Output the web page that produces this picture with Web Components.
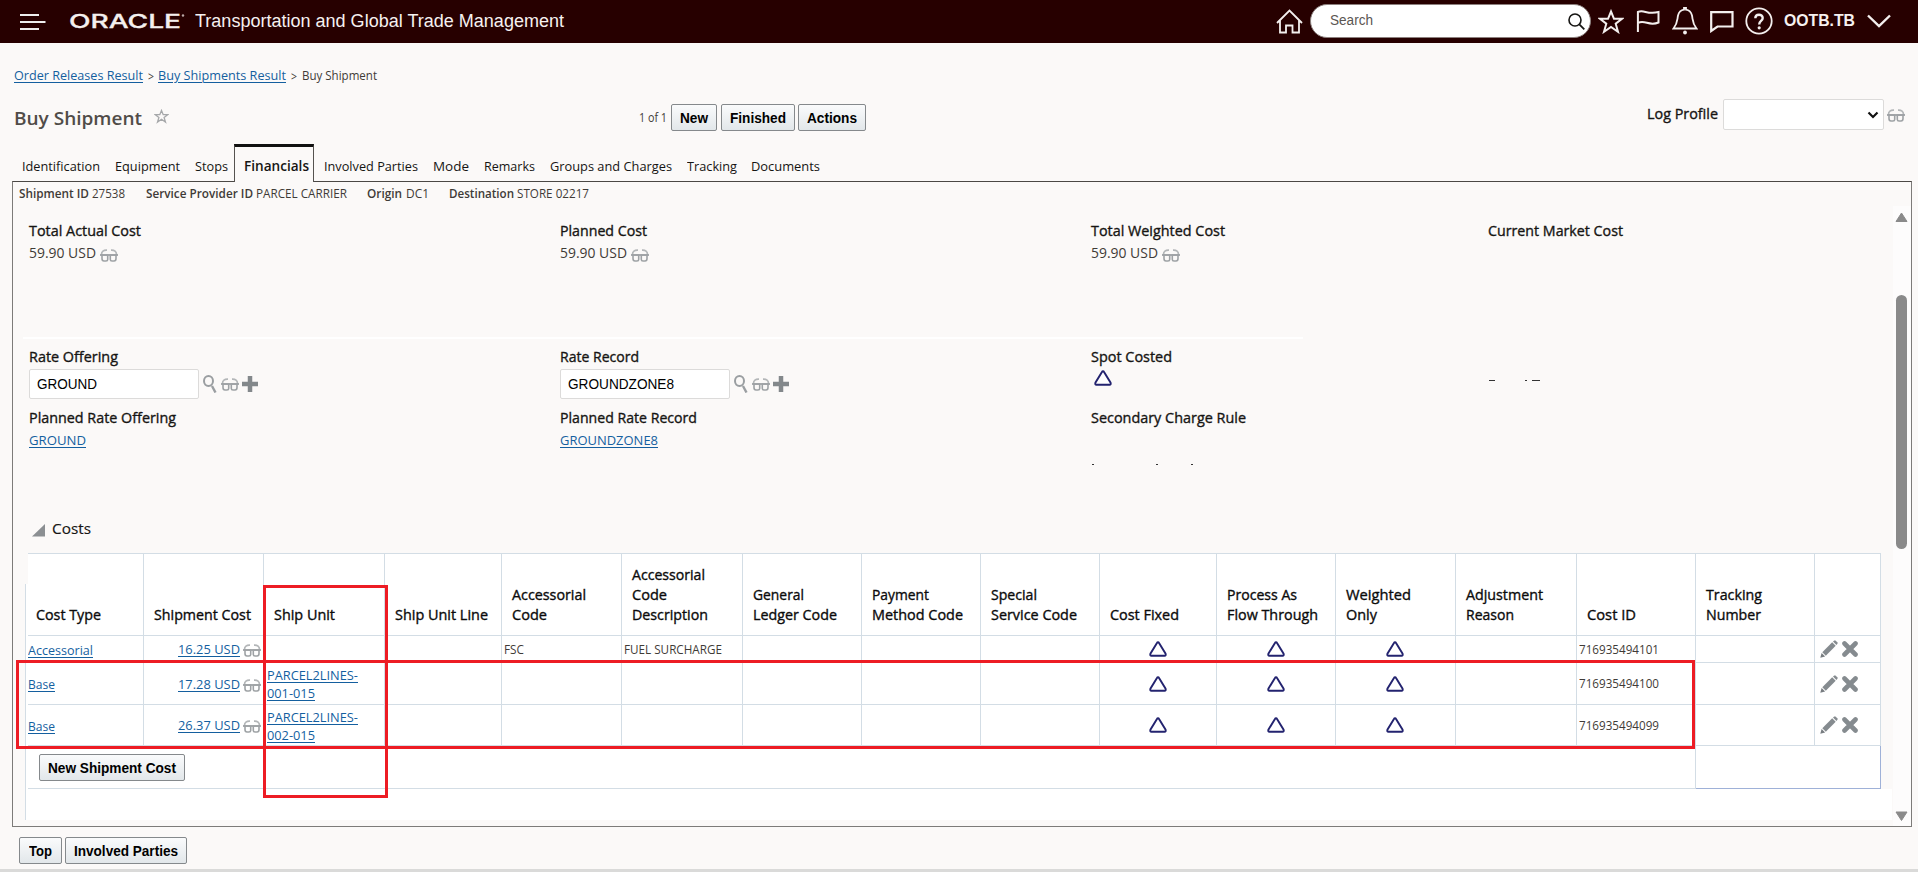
<!DOCTYPE html>
<html lang="en">
<head>
<meta charset="utf-8">
<title>Buy Shipment</title>
<style>
html,body{margin:0;padding:0;background:#fbf9f8}
body{width:1918px;height:872px;overflow:hidden;font-family:"Open Sans","Noto Sans",sans-serif;color:#161513}
</style>
</head>
<body>
<buy-shipment-page></buy-shipment-page>
<script>
const define = (name, html, after) => {
  const tpl = document.createElement('template');
  tpl.innerHTML = html;
  customElements.define(name, class extends HTMLElement {
    constructor() {
      super();
      this.attachShadow({ mode: 'open' }).append(tpl.content.cloneNode(true));
    }
    connectedCallback() { if (after) after(this, this.shadowRoot); }
  });
};

/* A single line of text condensed or expanded to a given width. */
define('fit-text', `<style>
:host{display:block;flex:none;white-space:nowrap;line-height:20px;text-align:left}
span{display:inline-block;transform-origin:0 50%}
:host([link]) span{color:#145f9f;text-decoration:underline;text-decoration-thickness:1px;text-underline-offset:2px}
</style><span><slot></slot></span>`, (el, root) => {
  const w = +el.getAttribute('w'), s = root.querySelector('span');
  el.style.width = w + 'px';
  const n = s.offsetWidth && s.getBoundingClientRect().width;
  if (n) s.style.transform = 'scaleX(' + (w / n) + ')';
});

const ICONS = {
  menu: [26,16,'<path d="M0 1h19M0 8h25.5M0 15h19" stroke="#eee" stroke-width="2"/>'],
  home: [27,25,'<path d="M1 14 13.500 1.500 26 14M4 11.500V23.500H10V16.500H16.500V23.500H23V11.500" fill="none" stroke="#f4efee" stroke-width="1.8"/>'],
  search: [17,17,'<circle cx="7" cy="7" r="6" fill="none" stroke="#161513" stroke-width="1.6"/><path d="m11.300 11.300 5 5" stroke="#161513" stroke-width="1.8"/>'],
  star: [26,25,'<path d="M13 2.500 16 9.800H24L17.700 14.700 20 22.800 13 18 6 22.800 8.300 14.700 2 9.800H10Z" fill="none" stroke="#f4efee" stroke-width="2"/>'],
  flag: [24,23,'<path d="M1.900 22V2C8-.8 11 5 22.500 2V12.500C13 16.500 9 9.500 1.900 13" fill="none" stroke="#f4efee" stroke-width="2"/>'],
  bell: [26,28,'<path d="M1.500 21.500C5.500 16.500 5 14 6 8.500 7 4.500 9.500 3 12 2.700V1h2V2.700C16.500 3 19 4.500 20 8.500 21 14 20.500 16.500 24.500 21.500Z" fill="none" stroke="#f4efee" stroke-width="1.800"/><circle cx="13" cy="25.500" r="1.900" fill="#f4efee"/>'],
  chat: [24,22,'<path d="M1.200 1.200H22.500V15.500H7.500L1.200 20Z" fill="none" stroke="#f4efee" stroke-width="2.200"/>'],
  help: [28,28,'<circle cx="14" cy="14" r="12.700" fill="none" stroke="#f4efee" stroke-width="1.800"/><path d="M10.300 11.300C10.300 6.500 17.700 6.700 17.700 11 17.700 14 14.200 14 14.200 17.400" fill="none" stroke="#f4efee" stroke-width="2.400"/><circle cx="14.200" cy="20.800" r="1.600" fill="#f4efee"/>'],
  down: [24,14,'<path d="m1 1.500 11 10.500L23 1.500" fill="none" stroke="#f4efee" stroke-width="2.400"/>'],
  fav: [15,15,'<path d="m7.500 1.500 1.700 4.200h4.500L10.100 8.500l1.400 4.600-4-2.800-4 2.800 1.400-4.600L1.300 5.700h4.500Z" fill="none" stroke="#a6a8aa" stroke-width="1.300"/>'],
  caret: [12,8,'<path d="m1.500 1.500 4.500 4.500 4.500-4.500" fill="none" stroke="#111" stroke-width="2.200"/>'],
  view: [18,13,'<path d="M1.500 5.500C1.500 2.500 3.500 1 7 1.200M16.500 5.500C16.500 2.500 14.500 1 11 1.200" fill="none" stroke="#b3b6b8" stroke-width="1.700"/><path d="M0 6H18" stroke="#8d9194" stroke-width="1.500"/><path d="M2 6H7.700V10.500Q7.700 12 6 12H4Q2 12 2 9.500ZM16 6H10.300V10.500Q10.300 12 12 12H14Q16 12 16 9.500Z" fill="none" stroke="#9ea2a5" stroke-width="1.600"/>'],
  find: [14,18,'<ellipse cx="5.500" cy="6" rx="4.500" ry="5" fill="none" stroke="#9a9ea1" stroke-width="2"/><path d="m9 11 3.500 6.500" stroke="#9a9ea1" stroke-width="2.400"/>'],
  plus: [16,16,'<path d="M8 0V16M0 8H16" stroke="#83888b" stroke-width="4.500"/>'],
  tri: [18,16,'<path d="M9 1.300Q9.700 1.300 10.200 2.200L16.600 12.700Q17.200 14.700 15.500 14.800H2.500Q.8 14.700 1.400 12.700L7.800 2.200Q8.300 1.300 9 1.300Z" fill="#fff" stroke="#23236f" stroke-width="1.900"/>'],
  pencil: [18,18,'<path d="M.3 17.700 1.600 12.900 5.100 16.400Z" fill="#777c80"/><path d="M2.300 12.200 12.200 2.300 15.700 5.800 5.800 15.700Z" fill="#858b8f"/><path d="M13 1.600 14.200.5H15.500L17.500 2.500V3.800L16.400 5Z" fill="#858b8f"/>'],
  x: [16,16,'<path d="m2.500 2.500 11 11m0-11-11 11" stroke="#858b8f" stroke-width="4.600" stroke-linecap="round"/>'],
  fold: [14,13,'<path d="M13 0V12.500H0Z" fill="#8b8f92"/>'],
  up: [13,11,'<path d="M6.500 1 12 9.500H1Z" fill="#8a8a8a" stroke="#8a8a8a" stroke-linejoin="round"/>'],
  dn: [13,11,'<path d="M6.500 9.500 12 1H1Z" fill="#8a8a8a" stroke="#8a8a8a" stroke-linejoin="round"/>']
};
define('ui-icon', '<style>:host{display:block;flex:none}svg{display:block}</style><div></div>', (el, root) => {
  const [w, h, body] = ICONS[el.getAttribute('name')];
  root.querySelector('div').innerHTML = `<svg width="${w}" height="${h}" viewBox="0 0 ${w} ${h}">${body}</svg>`;
});

define('ui-button', `<style>
:host{display:flex;justify-content:center;flex:none;box-sizing:border-box;height:27px;border:1px solid #85898c;border-radius:2px;background:linear-gradient(#fafbfc,#e2e7ea);font:bold 14px "Liberation Sans",sans-serif;color:#000}
fit-text{line-height:26px}
</style><fit-text><slot></slot></fit-text>`, (el, root) => {
  el.style.width = el.getAttribute('box') + 'px';
  const f = root.querySelector('fit-text'), w = +el.getAttribute('w');
  f.style.width = w + 'px';
  const s = f.shadowRoot.querySelector('span');
  s.style.transform = 'none';
  s.style.transform = 'scaleX(' + (w / s.getBoundingClientRect().width) + ')';
});

define('app-header', `<style>
:host{display:flex;align-items:flex-start;height:43px;background:#270000;color:#f6f1f0;font-family:"Liberation Sans",sans-serif}
.logo{flex:none;margin:11px 0 0 23px}
.search{display:flex;box-sizing:border-box;width:281px;height:34px;border:1px solid #8c807e;border-radius:17px;background:#fff;margin:4px 0 0 7px;color:#5b5652;font-size:14px}
</style>
<ui-icon name="menu" style="margin:14px 0 0 20px"></ui-icon>
<svg class="logo" width="119" height="20"><text x="0" y="16.500" font-family="Inter,sans-serif" font-weight="500" font-size="19" textLength="112" lengthAdjust="spacingAndGlyphs" fill="#f4efee" stroke="#f4efee" stroke-width=".3">ORACLE</text><circle cx="114" cy="4.500" r="1.200" fill="#b9a9a7"/></svg>
<fit-text w="369" style="font-size:18px;margin:11px 0 0 7px">Transportation and Global Trade Management</fit-text>
<ui-icon name="home" style="margin:9px 0 0 712px"></ui-icon>
<div class="search"><fit-text w="43" style="margin:5px 0 0 19px">Search</fit-text><ui-icon name="search" style="margin:8px 0 0 195px"></ui-icon></div>
<ui-icon name="star" style="margin:9px 0 0 7px"></ui-icon>
<ui-icon name="flag" style="margin:10px 0 0 12px"></ui-icon>
<ui-icon name="bell" style="margin:7px 0 0 12px"></ui-icon>
<ui-icon name="chat" style="margin:11px 0 0 12px"></ui-icon>
<ui-icon name="help" style="margin:7px 0 0 11px"></ui-icon>
<fit-text w="71" style="font-size:16.500px;font-weight:bold;margin:10px 0 0 11px">OOTB.TB</fit-text>
<ui-icon name="down" style="margin:14px 0 0 12px"></ui-icon>`);

define('bread-crumbs', `<style>
:host{display:flex;padding:22px 0 0 14px;font-size:13.5px;color:#3f3b37}
.s{font-size:12.500px;line-height:21px}
</style>
<fit-text link w="129">Order Releases Result</fit-text>
<fit-text w="6" class="s" style="margin-left:5px;margin-right:-1px;line-height:23px;height:20px">&gt;</fit-text>
<fit-text link w="128" style="margin-left:5px">Buy Shipments Result</fit-text>
<fit-text w="6" class="s" style="margin-left:5px;margin-right:-1px;line-height:23px;height:20px">&gt;</fit-text>
<fit-text w="75" class="s" style="margin-left:6px;height:20px;line-height:22px">Buy Shipment</fit-text>`);

define('title-bar', `<style>
:host{display:flex;align-items:flex-start;height:32px;margin-top:14px}
.sel{display:flex;justify-content:flex-end;box-sizing:border-box;width:161px;height:31px;margin-left:5px;border:1px solid #dcdbda;border-radius:2px;background:#fff}
</style>
<fit-text w="128" style="font-size:18.500px;font-weight:600;color:#504c48;line-height:26px;margin:6px 0 0 14px">Buy Shipment</fit-text>
<ui-icon name="fav" style="margin:10px 0 0 12px"></ui-icon>
<fit-text w="28" style="font-size:12.500px;color:#3f3b37;margin:9px 0 0 470px">1 of 1</fit-text>
<ui-button box="46" w="28" style="margin:5px 0 0 4px">New</ui-button>
<ui-button box="74" w="56" style="margin:5px 0 0 4px">Finished</ui-button>
<ui-button box="68" w="50" style="margin:5px 0 0 3px">Actions</ui-button>
<fit-text w="71" style="font-size:14.500px;-webkit-text-stroke:.35px;margin:5px 0 0 781px">Log Profile</fit-text>
<div class="sel"><ui-icon name="caret" style="margin:11px 4px 0 0"></ui-icon></div>
<ui-icon name="view" style="margin:10px 0 0 3px"></ui-icon>`);

define('tab-strip', `<style>
:host{display:flex;height:37px;margin-top:13px;font-size:13.500px}
fit-text{margin-top:12px}
.on{position:relative;z-index:1;box-sizing:border-box;width:80px;height:38px;margin:0 0 0 6px;border:1px solid #55524f;border-top:3px solid #111;border-bottom:0;background:#fbf9f8;padding-left:9px;font-weight:600}
.on fit-text{margin-top:9px}
</style>
<fit-text w="78" style="margin-left:22px">Identification</fit-text>
<fit-text w="65" style="margin-left:15px">Equipment</fit-text>
<fit-text w="33" style="margin-left:15px">Stops</fit-text>
<div class="on"><fit-text w="65">Financials</fit-text></div>
<fit-text w="94" style="margin-left:10px">Involved Parties</fit-text>
<fit-text w="36" style="margin-left:15px">Mode</fit-text>
<fit-text w="51" style="margin-left:15px">Remarks</fit-text>
<fit-text w="122" style="margin-left:15px">Groups and Charges</fit-text>
<fit-text w="50" style="margin-left:15px">Tracking</fit-text>
<fit-text w="69" style="margin-left:14px">Documents</fit-text>`);

define('shipment-summary', `<style>
:host{display:flex;height:16px;padding:3px 0 0 6px;font-size:12.500px;color:#3f3b37}
fit-text{line-height:18px}
b{font-weight:600}
</style>
<fit-text w="70"><b>Shipment ID</b></fit-text><fit-text w="33" style="margin-left:3px">27538</fit-text>
<fit-text w="107" style="margin-left:21px"><b>Service Provider ID</b></fit-text><fit-text w="91" style="margin-left:3px">PARCEL CARRIER</fit-text>
<fit-text w="35" style="margin-left:20px"><b>Origin</b></fit-text><fit-text w="23" style="margin-left:4px">DC1</fit-text>
<fit-text w="65" style="margin-left:20px"><b>Destination</b></fit-text><fit-text w="72" style="margin-left:3px">STORE 02217</fit-text>`);

define('form-field', `<style>
:host{display:block;font-size:13.500px}
.label{font-size:14.500px;-webkit-text-stroke:.35px;color:#161513}
.value{display:flex;align-items:flex-start;padding-top:2px}
</style><div class="label"><slot name="label"></slot></div><div class="value"><slot></slot></div>`);

const cost = (label, lw) => `<form-field><fit-text slot="label" w="${lw}">${label}</fit-text><fit-text w="67" style="font-size:14px;color:#3f3b37">59.90 USD</fit-text><ui-icon name="view" style="margin:6px 0 0 4px"></ui-icon></form-field>`;
const lookup = (label, lw, v, vw) => `<form-field><fit-text slot="label" w="${lw}">${label}</fit-text><div class="input"><fit-text w="${vw}">${v}</fit-text></div><ui-icon name="find" style="margin:6px 0 0 4px"></ui-icon><ui-icon name="view" style="margin:9px 0 0 4px"></ui-icon><ui-icon name="plus" style="margin:7px 0 0 3px"></ui-icon></form-field>`;
define('finance-fields', `<style>
:host{display:block}
.row{display:grid;grid-template-columns:531px 531px 397px 1fr;box-sizing:border-box;padding-left:16px}
.input{box-sizing:border-box;width:170px;height:30px;border:1px solid #dcdbda;border-radius:2px;background:#fff;padding-left:7px;font:14px "Liberation Sans",sans-serif;color:#000}
.input fit-text{line-height:29px}
hr{border:0;margin:0 0 0 10px;width:1280px;height:2px;background:#fff}
.bits{display:flex}
.bits i{display:block;height:1px;background:#333}
</style>
<div class="row" style="height:131px;padding-top:15px">${cost('Total Actual Cost',112)}${cost('Planned Cost',87)}${cost('Total Weighted Cost',134)}
<form-field><fit-text slot="label" w="135">Current Market Cost</fit-text></form-field></div>
<hr>
<div class="row" style="height:69px;padding-top:8px">${lookup('Rate Offering',89,'GROUND',60)}${lookup('Rate Record',79,'GROUNDZONE8',106)}
<form-field><fit-text slot="label" w="81">Spot Costed</fit-text><ui-icon name="tri" style="margin:1px 0 0 3px"></ui-icon></form-field>
<div class="bits" style="padding-top:33px"><i style="width:6px;margin-left:1px"></i><i style="width:2px;margin-left:30px"></i><i style="width:8px;margin-left:5px"></i></div></div>
<div class="row" style="height:111px;padding-top:0">
<form-field><fit-text slot="label" w="147">Planned Rate Offering</fit-text><fit-text link w="57">GROUND</fit-text></form-field>
<form-field><fit-text slot="label" w="137">Planned Rate Record</fit-text><fit-text link w="98">GROUNDZONE8</fit-text></form-field>
<form-field><fit-text slot="label" w="155">Secondary Charge Rule</fit-text><div class="bits" style="padding-top:34px"><i style="width:2px;margin-left:1px"></i><i style="width:2px;margin-left:62px"></i><i style="width:2px;margin-left:33px"></i></div></form-field>
</div>`);

const heads = [[['Cost Type',65]],[['Shipment Cost',97]],[['Ship Unit',61]],[['Ship Unit Line',93]],[['Accessorial',74],['Code',35]],
 [['Accessorial',73],['Code',35],['Description',76]],[['General',51],['Ledger Code',84]],[['Payment',57],['Method Code',91]],[['Special',46],['Service Code',86]],
 [['Cost Fixed',69]],[['Process As',70],['Flow Through',91]],[['Weighted',65],['Only',31]],[['Adjustment',77],['Reason',48]],[['Cost ID',49]],[['Tracking',56],['Number',55]],[]];
const headCells = heads.map(ls => `<div class="h">${ls.map(([t, w]) => `<fit-text w="${w}">${t}</fit-text>`).join('')}</div>`).join('');
const row = (h, type, tw, amt, unit, code, desc, id) => {
  const c = (inner, cls = '') => `<div class="c ${cls}" style="height:${h}px">${inner}</div>`;
  const tri = c('<ui-icon name="tri"></ui-icon>', 'mid');
  return c(`<fit-text link w="${tw}">${type}</fit-text>`, 'first')
    + c(`<fit-text link w="62">${amt}</fit-text><ui-icon name="view" style="margin:3px 2px 0 3px"></ui-icon>`, 'end')
    + c(unit ? `<div class="two"><fit-text link w="91">PARCEL2LINES-</fit-text><fit-text link w="48">${unit}</fit-text></div>` : '')
    + c('') + c(code ? `<fit-text w="20">${code}</fit-text>` : '', 'sm') + c(desc ? `<fit-text w="98">${desc}</fit-text>` : '', 'sm')
    + c('') + c('') + c('') + tri + tri + tri + c('') + c(`<fit-text w="80">${id}</fit-text>`, 'sm') + c('')
    + c('<ui-icon name="pencil" style="margin-left:2px"></ui-icon><ui-icon name="x" style="margin-left:4px"></ui-icon>');
};
define('costs-table', `<style>
:host{display:grid;grid-template-columns:3px 1853px 11px;grid-template-rows:236px 31px;margin-left:12px;width:1867px;position:relative}
.edge{grid-row:1/3;margin-top:31px;box-sizing:border-box;border-left:1px solid #d3dde5;background:#fff}
.tail{grid-column:2/4;background:#fff}
.grid{display:grid;grid-template-columns:116px 120px 121px 117px 120px 121px 119px 119px 119px 117px 119px 120px 121px 119px 119px 66px;grid-template-rows:82px 27px 42px 41px 43px;border-top:1px solid #d3dde5;background:#fff;font-size:13.500px}
.h,.c{box-sizing:border-box;border-right:1px solid #d3dde5;border-bottom:1px solid #d3dde5}
.h{display:flex;flex-direction:column;justify-content:flex-end;padding:0 0 10px 10px;font-size:14.500px;-webkit-text-stroke:.35px;color:#0b0b0b}
.h:first-child{padding-left:8px}
.c{display:flex;align-items:center;padding-left:3px}
.first{padding-left:0}
.first fit-text{margin-top:1px}
.mid{justify-content:center;padding:0 1px 0 0}
.end{justify-content:flex-end;padding:0}
.sm{font-size:12.500px;color:#3f3b37;padding:1px 0 0 2px}
.two fit-text{line-height:18px}
.two{padding-top:1px}
.foot{grid-column:1/15;display:flex;align-items:flex-start;box-sizing:border-box;border-right:1px solid #d3dde5;border-bottom:1px solid #d3dde5;padding:8px 0 0 11px}
.foot2{grid-column:15/17;box-sizing:border-box;border-right:1px solid #9fb1d8;border-bottom:1px solid #9fb1d8}
.mark{position:absolute;box-sizing:border-box;border:3px solid #ed1c24}
</style>
<div class="edge"></div>
<div class="grid">${headCells}${row(27,'Accessorial',65,'16.25 USD','','FSC','FUEL SURCHARGE','716935494101')}${row(42,'Base',27,'17.28 USD','001-015','','','716935494100')}${row(41,'Base',27,'26.37 USD','002-015','','','716935494099')}
<div class="foot"><ui-button box="146" w="128">New Shipment Cost</ui-button></div><div class="foot2"></div></div>
<div></div>
<div class="tail"></div>
<div class="mark" style="left:-9px;top:107px;width:1679px;height:89px"></div>
<div class="mark" style="left:238px;top:32px;width:125px;height:213px"></div>`);

define('scroll-track', `<style>
:host{display:flex;flex-direction:column;align-items:center;width:18px;background:#fdfcfc;height:620px}
.thumb{width:11px;height:254px;border-radius:6px;background:#8a8a8a;margin-top:72px}
ui-icon,.thumb{margin-right:1px}
</style><ui-icon name="up" style="margin-top:6px"></ui-icon><div class="thumb"></div><ui-icon name="dn" style="margin-top:262px"></ui-icon>`);

define('finance-panel', `<style>
:host{display:block;box-sizing:border-box;margin-left:12px;width:1900px;height:646px;border:1px solid #7d7b79;border-top-color:#4b4845}
.body{display:flex;margin-top:5px;height:620px}
.content{width:1880px}
.sec{display:flex;height:34px;padding-left:19px}
</style>
<shipment-summary></shipment-summary>
<div class="body"><div class="content"><finance-fields></finance-fields>
<div class="sec"><ui-icon name="fold" style="margin-top:5px"></ui-icon><fit-text w="39" style="margin-left:6px;font-size:14.500px;-webkit-text-stroke:.15px">Costs</fit-text></div>
<costs-table></costs-table></div><scroll-track></scroll-track></div>`);

define('buy-shipment-page', `<style>
:host{display:flex;flex-direction:column;height:872px}
.foot{display:flex;gap:3px;padding:10px 0 0 19px}
.bar{height:3px;background:#dadad9;margin-top:5px}
</style>
<app-header></app-header><bread-crumbs></bread-crumbs><title-bar></title-bar><tab-strip></tab-strip><finance-panel></finance-panel>
<div class="foot"><ui-button box="43" w="23">Top</ui-button><ui-button box="122" w="104">Involved Parties</ui-button></div><div class="bar"></div>`);
</script>
</body>
</html>
